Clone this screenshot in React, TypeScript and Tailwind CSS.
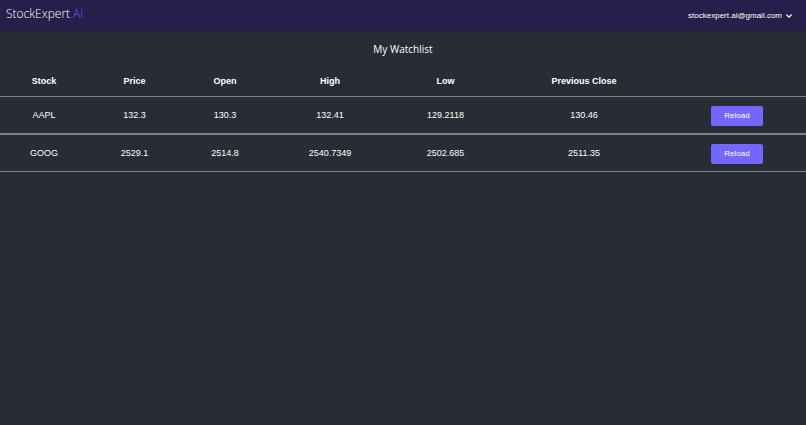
import React from "react";

const columns = [
  { title: "Stock", width: "w-[88px]" },
  { title: "Price", width: "w-[93px]" },
  { title: "Open", width: "w-[88px]" },
  { title: "High", width: "w-[122px]" },
  { title: "Low", width: "w-[109px]" },
  { title: "Previous Close", width: "w-[168px]" },
  { title: "", width: "w-[138px]" },
];

const stocks = [
  ["AAPL", "132.3", "130.3", "132.41", "129.2118", "130.46"],
  ["GOOG", "2529.1", "2514.8", "2540.7349", "2502.685", "2511.35"],
];

const Navbar = () => {
  return (
    <nav className="flex h-[31px] items-center justify-between bg-[#241f4b] px-1.5">
      <a
        href="#"
        className="pb-1 font-['Open_Sans','Noto_Sans',sans-serif] text-[12px] leading-4 font-light"
      >
        StockExpert<span className="text-[#6a60f0]">.AI</span>
      </a>
      <button
        type="button"
        className="flex items-center gap-1 pr-2 text-[8px] leading-4"
      >
        stockexpert.ai@gmail.com
        <svg
          viewBox="0 0 6 4"
          className="h-1 w-1.5"
          fill="none"
          stroke="currentColor"
          strokeWidth="1.2"
          aria-hidden="true"
        >
          <path d="M0.4 0.5 3 3.2 5.6 0.5" />
        </svg>
      </button>
    </nav>
  );
};

const Watchlist = () => {
  return (
    <main>
      <h1 className="pt-2.5 text-center font-['Open_Sans','Noto_Sans',sans-serif] text-[10px] leading-4">
        My Watchlist
      </h1>
      <table className="mt-2 w-full table-fixed border-separate border-spacing-0 text-center text-[9px]">
        <thead>
          <tr className="h-8">
            {columns.map((column) => (
              <th
                key={column.title}
                className={`border-b border-[#7d8186] pt-0.5 font-bold ${column.width}`}
              >
                {column.title}
              </th>
            ))}
          </tr>
        </thead>
        <tbody className="[&_td]:border-b [&_td]:border-[#7d8186] [&_td]:pt-0.5">
          {stocks.map((stock) => (
            <tr
              key={stock[0]}
              className="h-[37px] first:h-[38px] first:[&>td]:border-b-2"
            >
              {stock.map((value, index) => (
                <td key={index}>{value}</td>
              ))}
              <td>
                <button
                  type="button"
                  aria-label={`Reload ${stock[0]}`}
                  className="h-5 w-[52px] rounded-xs bg-[#7367ff] align-middle text-[8px]"
                >
                  Reload
                </button>
              </td>
            </tr>
          ))}
        </tbody>
      </table>
    </main>
  );
};

const App = () => {
  return (
    <div className="min-h-screen bg-[#282c34] font-['Liberation_Sans',Arial,sans-serif] text-white">
      <Navbar />
      <Watchlist />
    </div>
  );
};

export default App;
